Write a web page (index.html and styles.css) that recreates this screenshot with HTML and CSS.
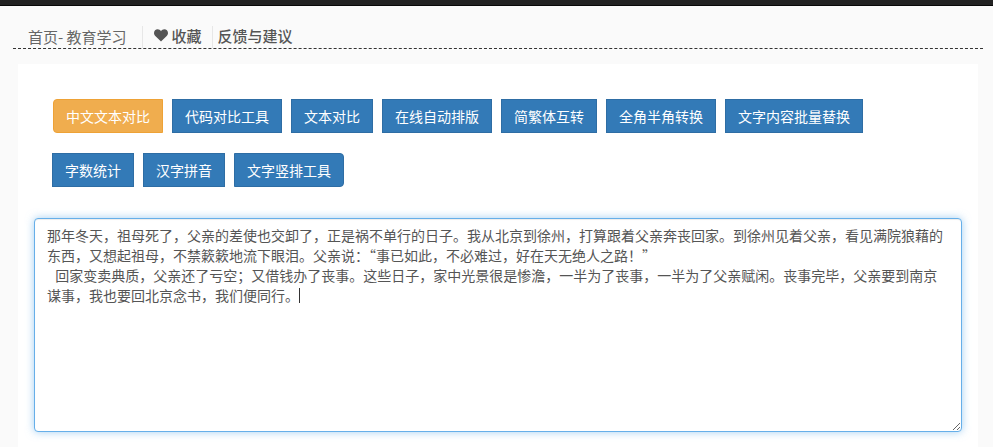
FILE: index.html
```html
<!DOCTYPE html>
<html lang="zh-CN">
<head>
<meta charset="utf-8">
<title>中文文本对比</title>
<link rel="stylesheet" href="styles.css">
</head>
<body>
<div class="topbar"></div>
<header class="crumbs">
  <a class="crumb-home">首页- 教育学习</a>
  <a class="crumb-link crumb-fav"><svg class="heart" viewBox="0 0 14 13" width="14" height="13"><path d="M7 12.6 1.3 6.9C.4 6 0 5.1 0 4 0 1.8 1.6.3 3.7.3 5 .3 6.2 1 7 2.2 7.8 1 9 .3 10.3.3 12.4.3 14 1.8 14 4c0 1.1-.4 2-1.3 2.9z"/></svg>收藏</a>
  <a class="crumb-link">反馈与建议</a>
</header>
<main class="panel">
  <nav class="tools">
    <div class="tool-row tool-row-first">
      <a class="btn btn-active">中文文本对比</a>
      <a class="btn">代码对比工具</a>
      <a class="btn">文本对比</a>
      <a class="btn">在线自动排版</a>
      <a class="btn">简繁体互转</a>
      <a class="btn">全角半角转换</a>
      <a class="btn">文字内容批量替换</a>
    </div>
    <div class="tool-row">
      <a class="btn">字数统计</a>
      <a class="btn">汉字拼音</a>
      <a class="btn btn-last">文字竖排工具</a>
    </div>
  </nav>
  <div class="editor">
    <textarea class="editor-text" spellcheck="false">那年冬天，祖母死了，父亲的差使也交卸了，正是祸不单行的日子。我从北京到徐州，打算跟着父亲奔丧回家。到徐州见着父亲，看见满院狼藉的东西，又想起祖母，不禁簌簌地流下眼泪。父亲说：“事已如此，不必难过，好在天无绝人之路！”
  回家变卖典质，父亲还了亏空；又借钱办了丧事。这些日子，家中光景很是惨澹，一半为了丧事，一半为了父亲赋闲。丧事完毕，父亲要到南京谋事，我也要回北京念书，我们便同行。</textarea>
    <span class="caret"></span>
  </div>
</main>
</body>
</html>
```
FILE: styles.css
```css
* { box-sizing: border-box; }
html, body { height: 100%; }
body {
  margin: 0;
  background: #fafafa;
  font-family: "Noto Sans CJK SC", "Liberation Sans", sans-serif;
  font-size: 14px;
  color: #555;
  overflow: hidden;
}
.topbar {
  height: 6px;
  background: #222;
  border-bottom: 1px solid #080808;
}
.crumbs {
  display: flex;
  align-items: flex-end;
  height: 43px;
  margin: 0 10px 0 13px;
  padding: 20px 0 0 15px;
  border-bottom: 1px dashed #333;
  font-size: 15px;
  line-height: 21px;
}
.crumb-home {
  color: #666;
  padding-right: 15px;
  border-right: 1px solid #e7e7e7;
  height: 22px;
  line-height: 22px;
}
.crumb-link {
  display: flex;
  align-items: center;
  height: 22px;
  font-weight: 500;
  color: #555;
  padding: 0 5px 3px;
}
.crumb-fav {
  padding-left: 11px;
  padding-right: 10px;
  border-right: 1px solid #e7e7e7;
}
.heart { fill: #555; margin-right: 4px; margin-top: -1px; }
.panel {
  margin: 15px 15px 0 18px;
  padding: 35px 16px 0;
  background: #fff;
  height: 400px;
}
.tools { padding: 0 0 0 18px; }
.tool-row { display: flex; gap: 9px; margin-bottom: 20px; }
.tool-row-first { margin-left: 1px; }
.btn {
  display: block;
  height: 34px;
  padding: 6px 12px;
  font-size: 14px;
  line-height: 20px;
  color: #fff;
  background: #337ab7;
  border: 1px solid #2e6da4;
  white-space: nowrap;
}
.btn-active {
  background: #f0ad4e;
  border-color: #eea236;
  border-radius: 4px 0 0 4px;
}
.btn-last { border-radius: 0 4px 4px 0; }
.editor { position: relative; margin-top: 31px; }
.editor-text {
  display: block;
  width: 928px;
  height: 214px;
  padding: 6px 12px;
  font-family: inherit;
  font-size: 14px;
  line-height: 20px;
  word-spacing: 1px;
  color: #555;
  background: #fff;
  border: 1px solid #66afe9;
  border-radius: 4px;
  outline: 0;
  box-shadow: inset 0 1px 1px rgba(0,0,0,.075), 0 0 8px rgba(102,175,233,.6);
  resize: vertical;
}
.caret {
  position: absolute;
  left: 265px;
  top: 70px;
  width: 1px;
  height: 15px;
  background: #333;
}
```
